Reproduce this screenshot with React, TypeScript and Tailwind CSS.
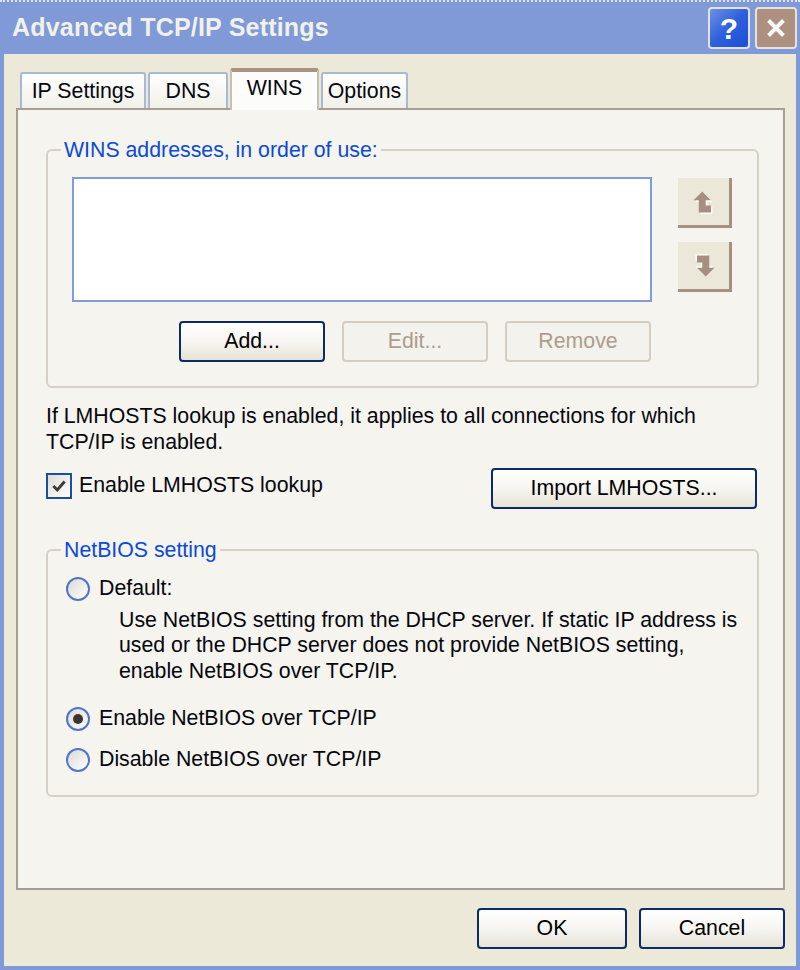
import { useState } from "react";

const FONT = "font-['Liberation_Sans',Arial,sans-serif]";

function XPButton({
  label,
  disabled,
  className = "",
}: {
  label: string;
  disabled?: boolean;
  className?: string;
}) {
  if (disabled) {
    return (
      <button
        disabled
        className={`h-[41px] rounded-[4px] border-2 border-[#d4cdc0] bg-[#f3f2ec] text-[#ae9c8d] ${className}`}
      >
        {label}
      </button>
    );
  }
  return (
    <button
      className={`h-[41px] rounded-[4px] border-2 border-[#0b2a66] bg-gradient-to-b from-white via-[#f6f5f1] to-[#e6e3d6] text-black ${className}`}
    >
      {label}
    </button>
  );
}

function ArrowButton({ down }: { down?: boolean }) {
  return (
    <button className="flex h-[50px] w-[54px] items-center justify-center border-b-[3px] border-r-[3px] border-[#a68f80] bg-[#ebe8da]">
      <svg
        viewBox="0 0 16 16"
        className={`h-[28px] w-[28px] ${down ? "rotate-180" : ""}`}
      >
        <path d="M7 2 L12 7 H9 V10 H12 V14 H5 V7 H2 Z" fill="#ffffff" transform="translate(0.8 0.8)" />
        <path d="M7 2 L12 7 H9 V10 H12 V14 H5 V7 H2 Z" fill="#a68f80" />
      </svg>
    </button>
  );
}

function Radio({ checked, label }: { checked?: boolean; label: string }) {
  return (
    <label className="flex items-center gap-[9px]">
      <span className="flex h-[24px] w-[24px] items-center justify-center rounded-full border-2 border-[#4f74cf] bg-gradient-to-br from-[#dcdad2] to-white">
        {checked && <span className="h-[10px] w-[10px] rounded-full bg-[#3b3430]" />}
      </span>
      <span>{label}</span>
    </label>
  );
}

export default function App() {
  const [lmhosts, setLmhosts] = useState(true);
  const tabs = [
    { name: "IP Settings", w: "w-[126px]" },
    { name: "DNS", w: "w-[80px]" },
    { name: "WINS", w: "w-[89px]" },
    { name: "Options", w: "w-[87px]" },
  ];
  const active = "WINS";

  return (
    <div className={`flex h-[970px] w-[800px] flex-col bg-[#7f9ad7] ${FONT} text-[21.3px] text-[#05070d]`}>
      {/* Title bar */}
      <div className="flex h-[54px] items-center justify-between border-t-2 border-dotted border-[#dfe6f6] pl-[12px] pr-[3px]">
        <span className="text-[25px] font-bold tracking-[0.2px] text-[#f1f1ea]">
          Advanced TCP/IP Settings
        </span>
        <div className="flex gap-[5px]">
          <div className="flex h-[42px] w-[42px] items-center justify-center rounded-[4px] border-2 border-[#dfe3ee] bg-gradient-to-br from-[#6d8fe0] via-[#2e5fdc] to-[#1d4fd8] text-[30px] font-bold text-white">
            ?
          </div>
          <div className="flex h-[42px] w-[42px] items-center justify-center rounded-[4px] border-2 border-[#e6e2dc] bg-[#ad9080]">
            <svg viewBox="0 0 16 16" className="h-[24px] w-[24px]">
              <path d="M3 3 L13 13 M13 3 L3 13" stroke="white" strokeWidth={2.6} />
            </svg>
          </div>
        </div>
      </div>

      {/* Dialog body */}
      <div className="mx-[4px] mb-[4px] flex flex-1 flex-col bg-[#ece9d8] pl-[12px] pr-[11px] pt-[14px]">
        {/* Tabs */}
        <div className="flex h-[40px] items-end gap-[2px] pl-[4px]">
          {tabs.map((t) =>
            t.name === active ? (
              <div
                key={t.name}
                className={`relative z-10 -mb-[2px] flex h-[42px] justify-center rounded-t-[3px] border-x-2 border-t-[4px] border-x-[#c7bfb4] border-t-[#ab9282] bg-[#fcfcfb] pt-[1px] ${t.w}`}
              >
                {t.name}
              </div>
            ) : (
              <div
                key={t.name}
                className={`flex h-[36px] items-center justify-center rounded-t-[3px] border-x-2 border-t-2 border-[#a9b8d4] bg-gradient-to-b from-white to-[#f1f0ea] pt-[2px] ${t.w}`}
              >
                {t.name}
              </div>
            )
          )}
        </div>

        {/* Tab panel */}
        <div className="flex h-[782px] flex-col border-2 border-[#a69d94] bg-[#f5f4ef] pl-[28px] pr-[24px] pt-[29px]">
          <fieldset className="rounded-[6px] border-2 border-[#d6d1c4] pb-[24px] pl-[24px] pr-[25px] pt-[16px]">
            <legend className="-ml-[11px] px-[3px] leading-[22px] text-[#0c4ad6]">
              WINS addresses, in order of use:
            </legend>
            <div className="flex gap-[26px]">
              <div className="h-[125px] w-[580px] border-2 border-[#7f9dd8] bg-white" />
              <div className="flex flex-col gap-[14px] pt-[1px]">
                <ArrowButton />
                <ArrowButton down />
              </div>
            </div>
            <div className="mt-[19px] flex gap-[17px] pl-[107px]">
              <XPButton label="Add..." className="w-[146px]" />
              <XPButton label="Edit..." disabled className="w-[146px]" />
              <XPButton label="Remove" disabled className="w-[146px]" />
            </div>
          </fieldset>

          <p className="mt-[15px] leading-[26px]">
            If LMHOSTS lookup is enabled, it applies to all connections for which
            TCP/IP is enabled.
          </p>

          <div className="mt-[13px] flex items-center justify-between pr-[2px]">
            <label className="-mt-[5px] flex items-center gap-[7px]" onClick={() => setLmhosts((v) => !v)}>
              <span className="flex h-[26px] w-[26px] items-center justify-center border-2 border-[#1b4f9c] bg-gradient-to-br from-[#dedcd3] to-white">
                {lmhosts && (
                  <svg viewBox="0 0 16 16" className="h-[18px] w-[18px]">
                    <path d="M3 8 L6.5 11.5 L13 4" fill="none" stroke="#3a3a3a" strokeWidth={2.6} />
                  </svg>
                )}
              </span>
              Enable LMHOSTS lookup
            </label>
            <XPButton label="Import LMHOSTS..." className="w-[266px]" />
          </div>

          <fieldset className="mt-[30px] rounded-[6px] border-2 border-[#d6d1c4] pb-[19px] pl-[18px] pr-[20px] pt-[12px]">
            <legend className="-ml-[5px] px-[3px] leading-[22px] text-[#0c4ad6]">
              NetBIOS setting
            </legend>
            <Radio label="Default:" />
            <div className="mt-[3px] whitespace-nowrap pl-[53px] leading-[25.5px]">
              <div>Use NetBIOS setting from the DHCP server. If static IP address is</div>
              <div>used or the DHCP server does not provide NetBIOS setting,</div>
              <div>enable NetBIOS over TCP/IP.</div>
            </div>
            <div className="mt-[19px] flex flex-col gap-[9px]">
              <Radio checked label="Enable NetBIOS over TCP/IP" />
              <Radio label="Disable NetBIOS over TCP/IP" />
            </div>
          </fieldset>
        </div>

        {/* Bottom buttons */}
        <div className="mt-[18px] flex justify-end gap-[12px]">
          <XPButton label="OK" className="w-[150px]" />
          <XPButton label="Cancel" className="w-[146px]" />
        </div>
      </div>
    </div>
  );
}
